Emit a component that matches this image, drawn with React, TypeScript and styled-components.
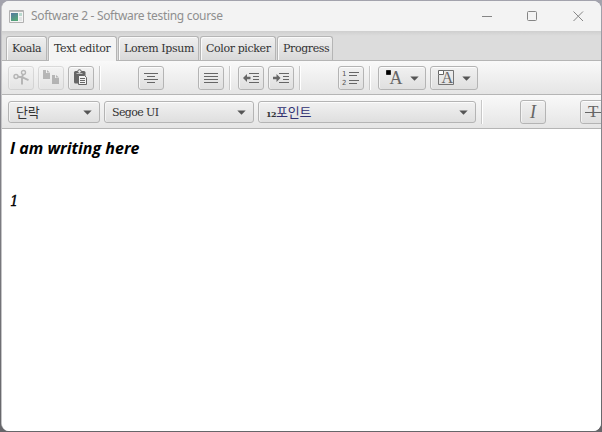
import React from 'react';
import styled, { createGlobalStyle, css } from 'styled-components';

const GlobalStyle = createGlobalStyle`
  * { box-sizing: border-box; }
  body { margin: 0; overflow: hidden; background: #77777b; }
`;

const Desktop = styled.div`
  width: 602px;
  height: 432px;
  padding: 1px;
  background: linear-gradient(180deg, #a3a3ad 0, #85858b 30%, #66666a 100%);
`;

const Window = styled.div`
  display: flex;
  flex-direction: column;
  width: 600px;
  height: 430px;
  overflow: hidden;
  border-radius: 8px;
  border-left: 1px solid #c4c4c6;
  background: #fff;
`;

const TitleBar = styled.header`
  display: flex;
  align-items: center;
  flex: 0 0 30px;
  padding-left: 7px;
  background: #f3f3f3;
  font: 12px 'Noto Sans', 'Open Sans', sans-serif;
  color: #8f8f8f;
`;

const Title = styled.span`
  flex: 1;
  padding: 0 0 1px 7px;
  letter-spacing: -0.32px;
  white-space: nowrap;
`;

const WindowControl = styled.span`
  display: flex;
  align-items: center;
  justify-content: center;
  width: 45.5px;
  height: 30px;
`;

const TabStrip = styled.nav`
  display: flex;
  align-items: flex-end;
  gap: 1px;
  flex: 0 0 30px;
  padding-left: 4px;
  border-bottom: 1px solid #b5b5b5;
  background: linear-gradient(#cfcfcf, #dcdcdc 5px, #dcdcdc);
`;

const Tab = styled.div<{ $width: number; $active?: boolean }>`
  display: flex;
  align-items: center;
  flex: 0 0 ${p => p.$width}px;
  height: ${p => (p.$active ? 25 : 24)}px;
  margin-bottom: ${p => (p.$active ? -1 : 0)}px;
  padding: 0 0 ${p => (p.$active ? 1 : 0)}px 5px;
  border: 1px solid #b5b5b5;
  border-bottom: 0;
  border-radius: 3px 3px 0 0;
  box-shadow: inset 1px 1px #fafafa;
  background: ${p => (p.$active ? '#f4f4f4' : 'linear-gradient(#efefef, #d9d9d9)')};
  font: 11px 'DejaVu Serif', serif;
  letter-spacing: -0.38px;
  white-space: nowrap;
  color: #333;
`;

const Toolbar = styled.div`
  display: flex;
  align-items: center;
  gap: 4px;
  flex: 0 0 34px;
  padding: 1px 0 0 6px;
  overflow: hidden;
  border-bottom: 1px solid #b5b5b5;
  background: linear-gradient(#f9f9f9, #e5e5e5);
`;

const raised = css`
  border: 1px solid #b4b4b4;
  border-radius: 3px;
  box-shadow: inset 0 1px #fcfcfc, inset 1px 0 #f3f3f3;
  background: linear-gradient(#f1f1f1, #dfdfdf);
`;

const ToolButton = styled.button<{ $width?: number }>`
  ${raised}
  display: flex;
  align-items: center;
  justify-content: center;
  gap: 7px;
  flex: 0 0 ${p => p.$width ?? 26}px;
  height: 24px;
  padding: 0;
  color: #666;
  &:disabled { opacity: 0.42; }
`;

const EmptySlot = styled.span`
  flex: 0 0 26px;
`;

const Separator = styled.span`
  flex: 0 0 6px;
  height: 24px;
  background: linear-gradient(90deg, transparent 1px, #c8c8c8 1px, #c8c8c8 2px, #fff 2px, #fff 3px, transparent 3px);
`;

const Combo = styled.div<{ $width: number }>`
  ${raised}
  display: flex;
  align-items: center;
  justify-content: space-between;
  flex: 0 0 ${p => p.$width}px;
  height: 22px;
  padding: 0 7px;
  font: 11px 'DejaVu Serif', 'Noto Sans CJK KR', serif;
  letter-spacing: -0.6px;
  color: #333;
`;

const Korean = styled.span`
  padding-bottom: 1px;
  font: 13px/18px 'Noto Sans CJK KR', sans-serif;
  letter-spacing: -0.2px;
  color: ${p => p.color ?? '#333'};
`;

const PointSize = styled.span`
  display: flex;
  align-items: center;
`;

const Digits = styled.span`
  width: 10px;
  padding-top: 4px;
  font-size: 8px;
  font-weight: 700;
  letter-spacing: -0.6px;
`;

const Editor = styled.main`
  flex: 1;
  padding: 8px;
  background: #fff;
  color: #000;
`;

const Paragraph = styled.p`
  margin: 0 0 31px;
  font: italic 700 16px/22px 'Open Sans', 'Noto Sans', sans-serif;
`;

const NumberLine = styled.p`
  margin: 0;
  font: italic 400 15px/22px 'DejaVu Serif Condensed', 'DejaVu Serif', serif;
  font-stretch: condensed;
  -webkit-text-stroke: 0.35px #000;
`;

const Svg = styled.svg`
  flex: none;
  overflow: visible;
`;

const Caret = () => (
  <Svg width="9" height="5" viewBox="0 0 9 5"><path d="M.3.5h8.4L4.5 4.7z" fill="#555" /></Svg>
);

const Icon = ({ children }: { children: React.ReactNode }) => (
  <Svg width="18" height="18" viewBox="0 0 18 18" fill="none" stroke="#666" strokeWidth="1">{children}</Svg>
);

const AppIcon = () => (
  <Svg width="15" height="13" viewBox="0 0 15 13">
    <defs><linearGradient id="screen" x2="0.5" y2="1"><stop stopColor="#5377a0" /><stop offset="1" stopColor="#54a678" /></linearGradient></defs>
    <path d="M.5.5h14v12H.5z" fill="#f4f4f4" stroke="#b1b1b1" />
    <path d="M1 1.3h13" stroke="#a8a8a8" />
    <path d="M2 3h7v8H2z" fill="url(#screen)" />
    <path d="M10 3h3v3h-3z" fill="#b9d9ce" /><path d="M10 7h3v4h-3z" fill="#e2e5e5" />
  </Svg>
);

const CutIcon = () => (
  <Icon>
    <circle cx="4" cy="7.500" r="2" strokeWidth="1.400" /><circle cx="11.500" cy="3.500" r="2" strokeWidth="1.400" />
    <path d="M6 7.800l4 .4 6.500 3M11 5.500l-1 3v7" strokeWidth="1.900" />
  </Icon>
);

const CopyIcon = () => (
  <Icon><path d="M1 1h3v3h4v6H1zM5 1l3 2.500H5zM10 6h3v3h4v6h-7zM14 6l3 2.500h-3z" fill="#666" stroke="none" /></Icon>
);

const PasteIcon = () => (
  <Icon><rect x="2" y="2" width="11.500" height="12.500" rx="1.500" fill="#666" stroke="none" />
    <circle cx="7.500" cy="2.500" r="1.800" fill="#eee" stroke="#666" /><path d="M4.500 4.500h6" stroke="#bbb" />
    <path d="M6.500 6.500h6l2 2v7h-8z" fill="#f2f2f2" />
    <path d="M8 9.500h5M8 11.500h5M8 13.500h5" /></Icon>
);

const CenterIcon = () => <Icon><path d="M2 4.500h14M5 7.500h8M2 10.500h14M5 13.500h8" /></Icon>;
const JustifyIcon = () => <Icon><path d="M2 4.500h14M2 7.500h14M2 10.500h14M2 13.500h14" /></Icon>;

const IndentIcon = ({ outward = false }: { outward?: boolean }) => (
  <Icon>
    <path d="M7 4.500h10M11 7.500h6M11 10.500h6M7 13.500h10" />
    <path d={outward ? 'M1 9l4-4v2.700h3.500v2.600H5V13z' : 'M8.500 9L4.500 5v2.700H1v2.600h3.500V13z'} fill="#666" stroke="none" />
  </Icon>
);

const ListIcon = () => (
  <Icon>
    <path d="M7 3.500h10M7 6.500h8M7 11.500h10M7 14.500h8" />
    <text x="0" y="7" fontFamily="DejaVu Sans" fontSize="7" fill="#555" stroke="none">1</text>
    <text x="0" y="16" fontFamily="DejaVu Sans" fontSize="7" fill="#555" stroke="none">2</text>
  </Icon>
);

const Letter = styled.text<{ $size: number }>`
  font: ${p => p.$size}px 'Liberation Serif', serif;
  fill: #666;
  stroke: none;
`;

const ForegroundIcon = () => (
  <Icon><Letter $size={18} x="4.500" y="15">A</Letter><path d="M1.500 1.500h4v4h-4z" fill="#000" stroke="#222" /></Icon>
);

const BackgroundIcon = () => (
  <Icon><path d="M1.500 6v9.500h15v-14H6" strokeWidth=".9" /><Letter $size={16} x="4.500" y="14">A</Letter><path d="M1.500 1.500h5v4h-5z" fill="#fff" /></Icon>
);

const Italic = styled.span`
  font: italic 18px/18px 'Liberation Serif', serif;
  color: #666;
`;

const StrikeIcon = () => (
  <Icon><Letter $size={17} x="4" y="14">T</Letter><path d="M1 9.500h17" /></Icon>
);

const tabs = [
  { label: 'Koala', width: 41 },
  { label: 'Text editor', width: 69, active: true },
  { label: 'Lorem Ipsum', width: 81 },
  { label: 'Color picker', width: 76 },
  { label: 'Progress', width: 56 },
];

export default function App() {
  return (
    <Desktop>
      <GlobalStyle />
      <Window>
        <TitleBar>
          <AppIcon />
          <Title>Software 2 - Software testing course</Title>
          <WindowControl><svg width="11" height="11"><path d="M0 5.500h10" stroke="#858585" /></svg></WindowControl>
          <WindowControl><svg width="11" height="11"><rect x=".5" y=".5" width="9" height="9" rx="1" fill="none" stroke="#858585" /></svg></WindowControl>
          <WindowControl><svg width="11" height="11"><path d="M.5.5l9.500 9.500m0-9.500l-9.500 9.500" stroke="#858585" /></svg></WindowControl>
        </TitleBar>
        <TabStrip>
          {tabs.map(t => <Tab key={t.label} $width={t.width} $active={t.active}>{t.label}</Tab>)}
        </TabStrip>
        <Toolbar>
          <ToolButton disabled><CutIcon /></ToolButton>
          <ToolButton disabled><CopyIcon /></ToolButton>
          <ToolButton><PasteIcon /></ToolButton>
          <Separator />
          <EmptySlot />
          <ToolButton><CenterIcon /></ToolButton>
          <EmptySlot />
          <ToolButton><JustifyIcon /></ToolButton>
          <Separator />
          <ToolButton><IndentIcon outward /></ToolButton>
          <ToolButton><IndentIcon /></ToolButton>
          <Separator />
          <EmptySlot />
          <ToolButton><ListIcon /></ToolButton>
          <Separator />
          <ToolButton $width={48}><ForegroundIcon /><Caret /></ToolButton>
          <ToolButton $width={48}><BackgroundIcon /><Caret /></ToolButton>
        </Toolbar>
        <Toolbar>
          <Combo $width={92}><Korean>단락</Korean><Caret /></Combo>
          <Combo $width={150}>Segoe UI<Caret /></Combo>
          <Combo $width={218}><PointSize><Digits>12</Digits><Korean color="#303072">포인트</Korean></PointSize><Caret /></Combo>
          <Separator />
          <EmptySlot />
          <ToolButton><Italic>I</Italic></ToolButton>
          <EmptySlot />
          <ToolButton><StrikeIcon /></ToolButton>
        </Toolbar>
        <Editor>
          <Paragraph>I am writing here</Paragraph>
          <NumberLine>1</NumberLine>
        </Editor>
      </Window>
    </Desktop>
  );
}
